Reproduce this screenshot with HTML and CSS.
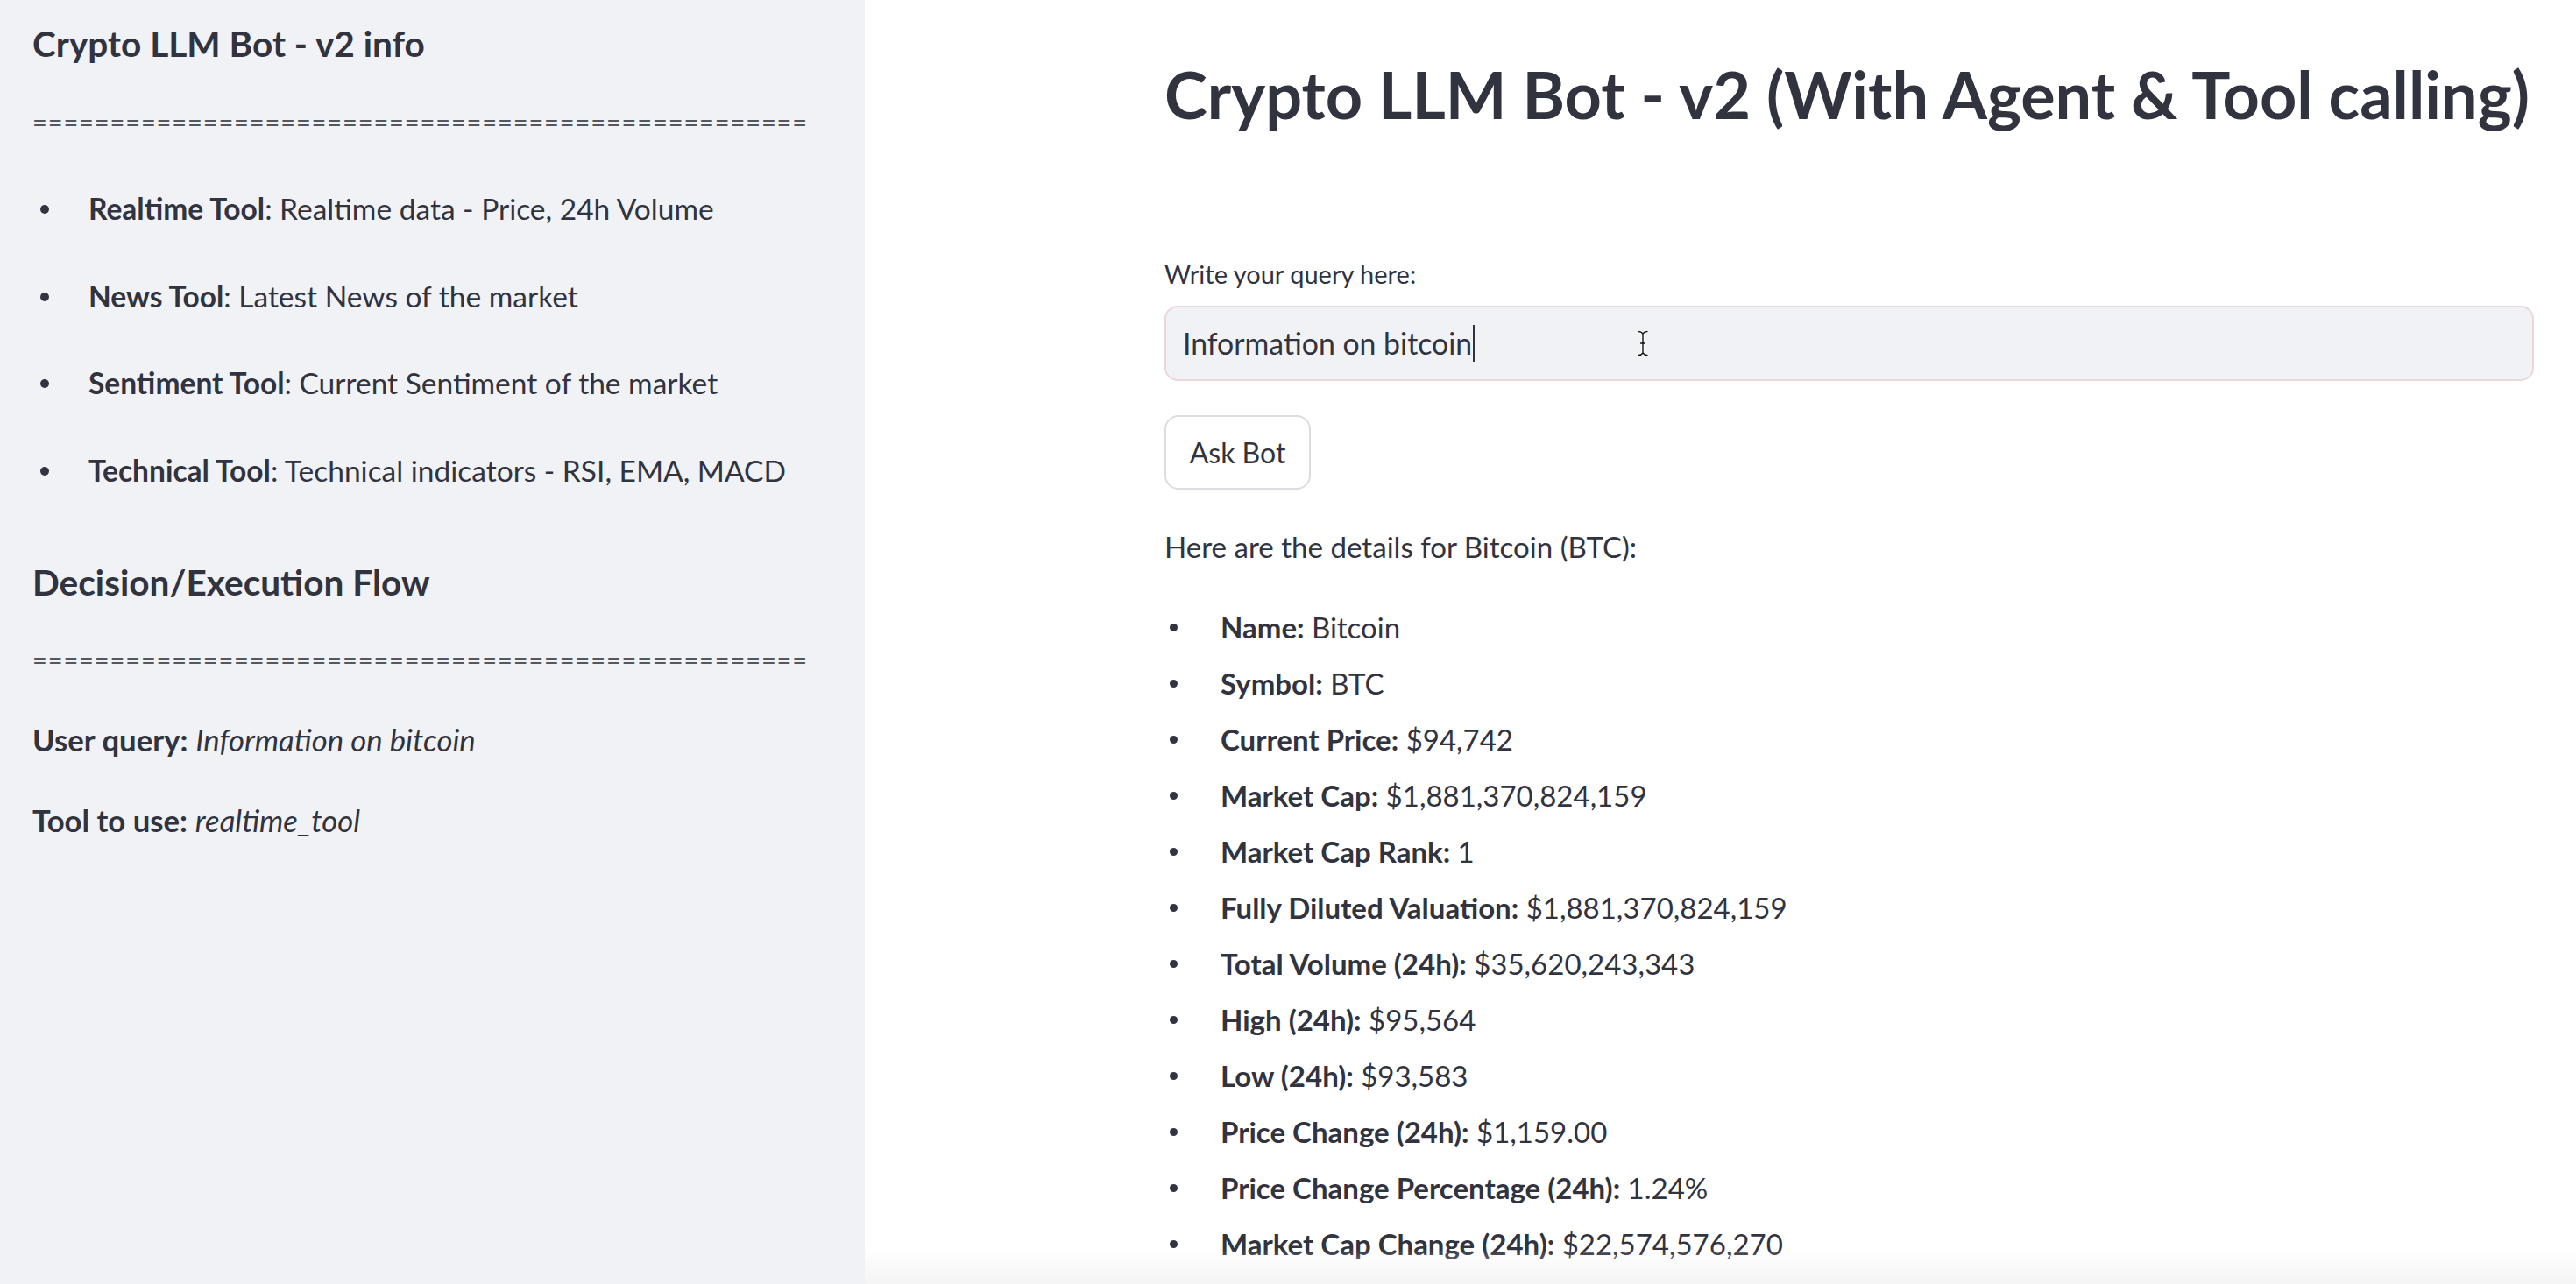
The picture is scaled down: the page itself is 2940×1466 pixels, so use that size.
FILE: index.html
```html
<!DOCTYPE html>
<html lang="en">
<head>
<meta charset="utf-8">
<title>Crypto LLM Bot - v2</title>
<link rel="stylesheet" href="styles.css">
</head>
<body>
<div class="app">
  <aside class="sidebar">
    <h3 class="side-title">Crypto LLM Bot - v2 info</h3>
    <div class="rule">==================================================</div>
    <ul class="side-list">
      <li><b>Realtime Tool</b>: Realtime data - Price, 24h Volume</li>
      <li><b>News Tool</b>: Latest News of the market</li>
      <li><b>Sentiment Tool</b>: Current Sentiment of the market</li>
      <li><b>Technical Tool</b>: Technical indicators - RSI, EMA, MACD</li>
    </ul>
    <h3 class="side-title flow">Decision/Execution Flow</h3>
    <div class="rule rule2">==================================================</div>
    <p class="side-p first"><b>User query:</b> <i>Information on bitcoin</i></p>
    <p class="side-p"><b>Tool to use:</b> <i>realtime_tool</i></p>
  </aside>
  <main class="main">
    <h1 class="title">Crypto LLM Bot - v2 (With Agent &amp; Tool calling)</h1>
    <label class="label">Write your query here:</label>
    <div class="input">
      <span class="input-text">Information on bitcoin</span><span class="caret"></span>
      <svg class="ibeam" width="14" height="30" viewBox="0 0 14 30">
        <path d="M2 1.5 C5 1.5 6 2.5 7 4 C8 2.5 9 1.5 12 1.5 M7 4 V26 M2 28.5 C5 28.5 6 27.5 7 26 C8 27.5 9 28.5 12 28.5 M4.5 15 H9.5" fill="none" stroke="#fff" stroke-width="3.2" stroke-linecap="round"/>
        <path d="M2 1.5 C5 1.5 6 2.5 7 4 C8 2.5 9 1.5 12 1.5 M7 4 V26 M2 28.5 C5 28.5 6 27.5 7 26 C8 27.5 9 28.5 12 28.5 M4.5 15 H9.5" fill="none" stroke="#111" stroke-width="1.4" stroke-linecap="round"/>
      </svg>
    </div>
    <button class="btn">Ask Bot</button>
    <p class="intro">Here are the details for Bitcoin (BTC):</p>
    <ul class="details">
      <li><b>Name:</b> Bitcoin</li>
      <li><b>Symbol:</b> BTC</li>
      <li><b>Current Price:</b> $94,742</li>
      <li><b>Market Cap:</b> $1,881,370,824,159</li>
      <li><b>Market Cap Rank:</b> 1</li>
      <li><b>Fully Diluted Valuation:</b> $1,881,370,824,159</li>
      <li><b>Total Volume (24h):</b> $35,620,243,343</li>
      <li><b>High (24h):</b> $95,564</li>
      <li><b>Low (24h):</b> $93,583</li>
      <li><b>Price Change (24h):</b> $1,159.00</li>
      <li><b>Price Change Percentage (24h):</b> 1.24%</li>
      <li><b>Market Cap Change (24h):</b> $22,574,576,270</li>
    </ul>
    <div class="fade"></div>
  </main>
</div>
</body>
</html>
```

FILE: styles.css
```css
html, body {
  margin: 0;
  padding: 0;
  height: 100%;
  overflow: hidden;
}
body {
  font-family: Lato, "Open Sans", sans-serif;
  color: #31333f;
  background: #ffffff;
}
.app {
  display: flex;
  height: 1466px;
}
.sidebar {
  width: 950px;
  flex: 0 0 950px;
  padding: 25px 0 0 37px;
  background: #f0f2f6;
}
.side-title {
  margin: 0;
  font-size: 40.6px;
  line-height: 50px;
  font-weight: 700;
}
.side-title.flow {
  margin-top: 78px;
}
.rule {
  margin-top: 44px;
  height: 40px;
  line-height: 40px;
  font-size: 29px;
  color: #55575f;
  white-space: nowrap;
  overflow: hidden;
  width: 884px;
  letter-spacing: 0.88px;
}
.rule2 {
  margin-top: 43px;
}
.side-list {
  list-style: none;
  margin: 54px 0 0 0;
  padding: 0;
}
.side-list li {
  position: relative;
  padding-left: 64px;
  font-size: 33.5px;
  line-height: 50px;
  height: 50px;
  margin-bottom: 49.5px;
  white-space: nowrap;
}
.side-list li:last-child {
  margin-bottom: 0;
}
.side-list li::before {
  content: "";
  position: absolute;
  left: 9px;
  top: 21px;
  width: 10px;
  height: 10px;
  border-radius: 50%;
  background: #31333f;
}
.side-p {
  margin: 42px 0 0 0;
  font-size: 34.7px;
  line-height: 50px;
  white-space: nowrap;
}
.side-p.first {
  margin-top: 47px;
}
.main {
  position: relative;
  flex: 1;
  padding: 64px 48px 0 342px;
  background: #ffffff;
}
.title {
  margin: 0;
  font-size: 73.8px;
  line-height: 88px;
  font-weight: 700;
  white-space: nowrap;
}
.label {
  display: block;
  margin-top: 141px;
  font-size: 29px;
  line-height: 40px;
}
.input {
  position: relative;
  box-sizing: border-box;
  margin-top: 16px;
  height: 86px;
  display: flex;
  align-items: center;
  padding-left: 19px;
  background: #f0f2f6;
  border: 2px solid #ecd6da;
  border-radius: 15px;
  font-size: 33.8px;
}
.caret {
  display: inline-block;
  width: 2px;
  height: 42px;
  background: #31333f;
  margin-left: 1px;
}
.ibeam {
  position: absolute;
  left: 537px;
  top: 26px;
}
.btn {
  display: block;
  box-sizing: border-box;
  margin-top: 39px;
  width: 167px;
  height: 85px;
  background: #ffffff;
  border: 2px solid #dcdde0;
  border-radius: 16px;
  font-family: Lato, "Open Sans", sans-serif;
  font-size: 32px;
  color: #31333f;
  padding: 0;
}
.intro {
  margin: 41px 0 0 0;
  font-size: 33.1px;
  line-height: 48px;
}
.details {
  list-style: none;
  margin: 36px 0 0 0;
  padding: 0;
}
.details li {
  position: relative;
  padding-left: 64px;
  font-size: 33px;
  line-height: 64px;
  height: 64px;
  white-space: nowrap;
}
.details li::before {
  content: "";
  position: absolute;
  left: 6px;
  top: 28px;
  width: 9px;
  height: 9px;
  border-radius: 50%;
  background: #31333f;
}
.fade {
  position: absolute;
  left: 0;
  right: 0;
  bottom: 0;
  height: 40px;
  background: linear-gradient(to bottom, rgba(240,240,242,0), rgba(240,240,242,0.7));
}
```
